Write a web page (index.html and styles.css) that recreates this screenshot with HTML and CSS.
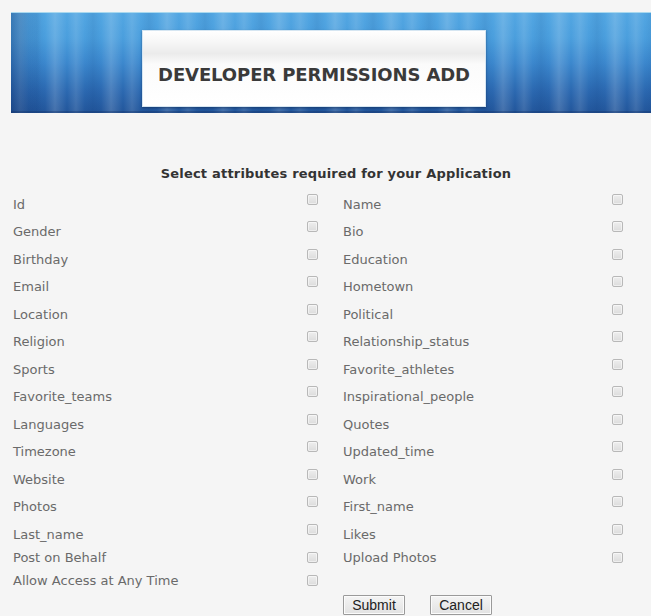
FILE: index.html
```html
<!DOCTYPE html>
<html lang="en">
<head>
<meta charset="utf-8">
<title>Developer Permissions Add</title>
<link rel="stylesheet" href="styles.css">
</head>
<body>
  <header class="banner">
    <div class="banner-title">
      <h1>DEVELOPER PERMISSIONS ADD</h1>
    </div>
  </header>

  <form class="perm-form">
    <h2 class="perm-heading">Select attributes required for your Application</h2>

    <div class="perm-row">
      <label class="perm-label">Id</label><input type="checkbox" class="perm-check">
      <label class="perm-label">Name</label><input type="checkbox" class="perm-check">
    </div>
    <div class="perm-row">
      <label class="perm-label">Gender</label><input type="checkbox" class="perm-check">
      <label class="perm-label">Bio</label><input type="checkbox" class="perm-check">
    </div>
    <div class="perm-row">
      <label class="perm-label">Birthday</label><input type="checkbox" class="perm-check">
      <label class="perm-label">Education</label><input type="checkbox" class="perm-check">
    </div>
    <div class="perm-row">
      <label class="perm-label">Email</label><input type="checkbox" class="perm-check">
      <label class="perm-label">Hometown</label><input type="checkbox" class="perm-check">
    </div>
    <div class="perm-row">
      <label class="perm-label">Location</label><input type="checkbox" class="perm-check">
      <label class="perm-label">Political</label><input type="checkbox" class="perm-check">
    </div>
    <div class="perm-row">
      <label class="perm-label">Religion</label><input type="checkbox" class="perm-check">
      <label class="perm-label">Relationship_status</label><input type="checkbox" class="perm-check">
    </div>
    <div class="perm-row">
      <label class="perm-label">Sports</label><input type="checkbox" class="perm-check">
      <label class="perm-label">Favorite_athletes</label><input type="checkbox" class="perm-check">
    </div>
    <div class="perm-row">
      <label class="perm-label">Favorite_teams</label><input type="checkbox" class="perm-check">
      <label class="perm-label">Inspirational_people</label><input type="checkbox" class="perm-check">
    </div>
    <div class="perm-row">
      <label class="perm-label">Languages</label><input type="checkbox" class="perm-check">
      <label class="perm-label">Quotes</label><input type="checkbox" class="perm-check">
    </div>
    <div class="perm-row">
      <label class="perm-label">Timezone</label><input type="checkbox" class="perm-check">
      <label class="perm-label">Updated_time</label><input type="checkbox" class="perm-check">
    </div>
    <div class="perm-row">
      <label class="perm-label">Website</label><input type="checkbox" class="perm-check">
      <label class="perm-label">Work</label><input type="checkbox" class="perm-check">
    </div>
    <div class="perm-row">
      <label class="perm-label">Photos</label><input type="checkbox" class="perm-check">
      <label class="perm-label">First_name</label><input type="checkbox" class="perm-check">
    </div>
    <div class="perm-row">
      <label class="perm-label">Last_name</label><input type="checkbox" class="perm-check">
      <label class="perm-label">Likes</label><input type="checkbox" class="perm-check">
    </div>
    <div class="perm-row perm-row--compact perm-row--behalf">
      <label class="perm-label">Post on Behalf</label><input type="checkbox" class="perm-check">
      <label class="perm-label">Upload Photos</label><input type="checkbox" class="perm-check">
    </div>
    <div class="perm-row perm-row--compact perm-row--anytime">
      <label class="perm-label">Allow Access at Any Time</label><input type="checkbox" class="perm-check">
    </div>

    <div class="perm-actions">
      <button type="submit" class="btn">Submit</button>
      <button type="button" class="btn">Cancel</button>
    </div>
  </form>
</body>
</html>
```

FILE: styles.css
```css
* {
  box-sizing: border-box;
}

html, body {
  margin: 0;
  padding: 0;
}

body {
  background: #f5f5f5;
  font-family: "DejaVu Sans", "Open Sans", sans-serif;
  color: #6a6a6a;
  width: 651px;
  height: 616px;
  overflow: hidden;
}

/* ---- blue striped banner ---- */
.banner {
  margin: 12px 0 0 11px;
  height: 101px;
  padding: 17px 0 0 131px;
  border-top: 1px solid #a9d8ee;
  background:
    linear-gradient(90deg,
      rgba(10, 40, 100, 0.35) 0px,
      rgba(10, 40, 100, 0.00) 30px,
      rgba(10, 40, 100, 0.00) 100%),
    repeating-linear-gradient(90deg,
      rgba(255, 255, 255, 0.00) 0px,
      rgba(255, 255, 255, 0.12) 9px,
      rgba(255, 255, 255, 0.00) 18px,
      rgba(0, 40, 100, 0.08) 26px,
      rgba(255, 255, 255, 0.00) 34px,
      rgba(255, 255, 255, 0.16) 44px,
      rgba(255, 255, 255, 0.00) 56px),
    linear-gradient(180deg,
      #52a6e2 0%,
      #4a9edd 25%,
      #3b87cd 50%,
      #2b68b0 78%,
      #22559a 100%);
  box-shadow: inset 0 -2px 0 rgba(20, 50, 100, 0.35);
}

.banner-title {
  width: 344px;
  height: 77px;
  background: linear-gradient(180deg,
    #ffffff 0%,
    #f7f7f7 14%,
    #ebebeb 30%,
    #fbfbfb 44%,
    #ffffff 100%);
  border: 1px solid #d6e6f2;
  box-shadow: 0 1px 2px rgba(10, 30, 70, 0.5);
  display: flex;
  align-items: center;
  justify-content: center;
  padding-top: 12px;
}

.banner-title h1 {
  margin: 0;
  font-family: "DejaVu Sans", sans-serif;
  font-size: 18px;
  font-weight: bold;
  color: #3a3a3a;
  letter-spacing: -0.1px;
}

/* ---- permissions form ---- */
.perm-form {
  margin: 0;
  padding: 53px 0 0 0;
}

.perm-heading {
  margin: 0 0 6px 0;
  height: 16px;
  line-height: 16px;
  font-size: 13px;
  font-weight: bold;
  color: #333;
  text-align: center;
  padding-left: 21px;
  letter-spacing: 0.2px;
}

.perm-row {
  display: grid;
  grid-template-columns: 307px 36px 269px 11px;
  align-items: center;
  height: 27.5px;
}

.perm-label {
  padding-left: 13px;
  font-size: 13px;
  line-height: 15px;
  color: #6a6a6a;
  padding-top: 5px;
  white-space: nowrap;
}

.perm-row .perm-label + .perm-check + .perm-label {
  padding-left: 0;
}

.perm-check {
  appearance: none;
  -webkit-appearance: none;
  margin: 0 0 5px 0;
  width: 11px;
  height: 11px;
  border: 1px solid #b8b8b8;
  border-radius: 2px;
  background: linear-gradient(180deg, #eeeeee 0%, #dcdcdc 100%);
  box-shadow: inset 0 0 0 1px rgba(255, 255, 255, 0.5);
}

.perm-row--compact .perm-label {
  padding-top: 0;
}

.perm-row--compact .perm-check {
  margin: 0;
}

.perm-row--behalf {
  height: 24px;
}

.perm-row--anytime {
  height: 21px;
}

/* ---- action buttons ---- */
.perm-actions {
  display: flex;
  gap: 25px;
  padding: 4px 0 0 343px;
}

.btn {
  height: 20px;
  width: 62px;
  padding: 0;
  font-family: "Liberation Sans", Arial, sans-serif;
  font-size: 14px;
  color: #222;
  background: linear-gradient(180deg, #f4f4f4 0%, #e2e2e2 100%);
  border: 1px solid #9a9a9a;
  border-radius: 1px;
  box-shadow: inset 0 0 0 1px #fbfbfb;
}
```
